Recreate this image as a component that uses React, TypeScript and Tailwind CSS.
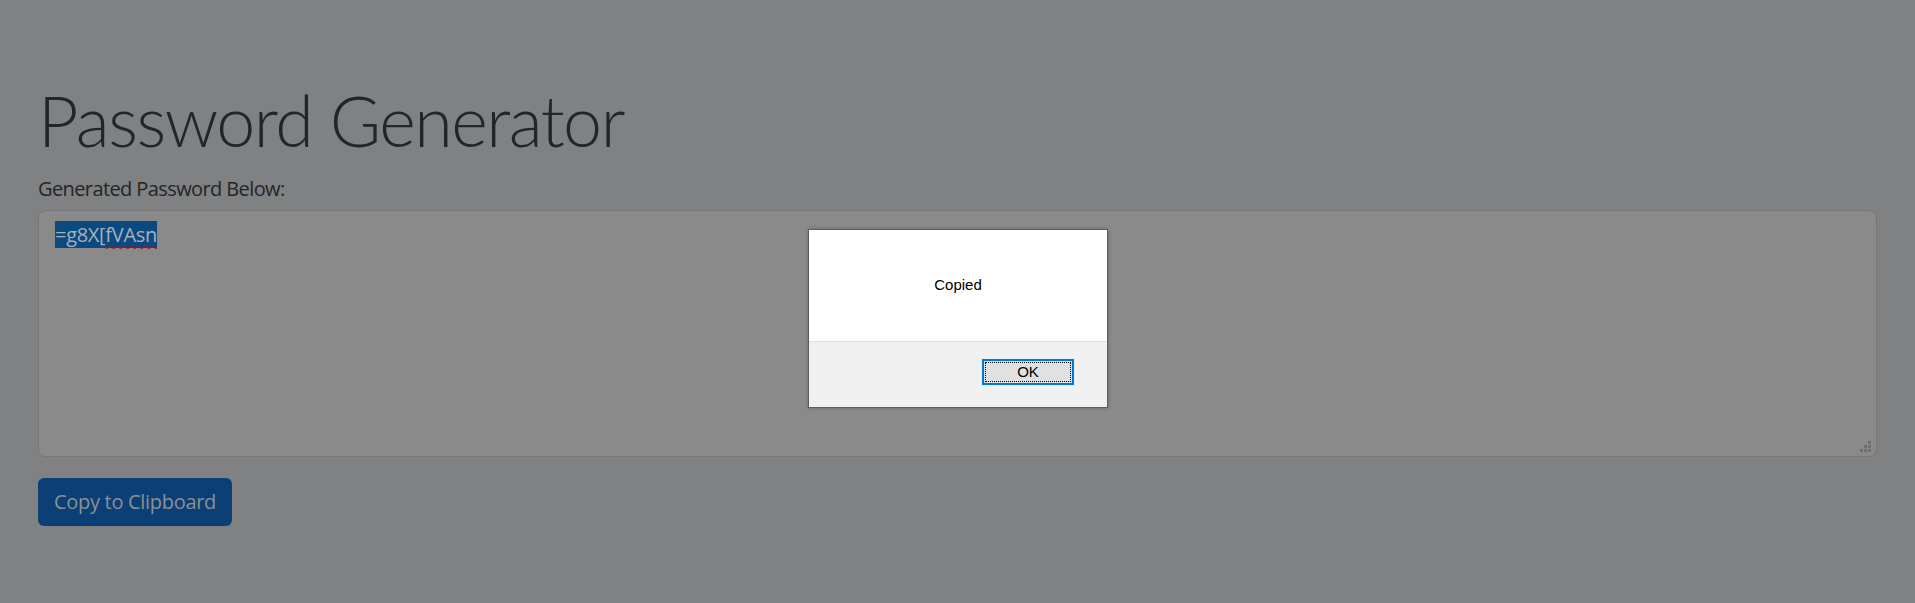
import React from 'react';

const PasswordGenerator = () => {
  return (
    <div className="relative min-h-[603px] w-full bg-[#808183] px-[38px] pt-[78px] font-['Open_Sans','Segoe_UI',sans-serif]">
      <h1 className="font-['Lato','Open_Sans',sans-serif] text-[70px] font-light leading-[1.2] tracking-[-1.5px] text-[#232527]">Password Generator</h1>
      <label className="mt-[12px] block text-[20px] leading-[1.5] text-[#232527] tracking-[-0.6px]">
        Generated Password Below:
      </label>
      <div className="relative mt-[6px] h-[247px] w-full rounded-[8px] border border-[#767778] bg-[#8a8a8a] px-[16px] py-[10px]">
        <span className="bg-[#0b4a80] text-[20px] leading-[27px] text-[#a9b0b8] inline-block tracking-[-0.3px]">
          =g8X[<span className="underline decoration-wavy decoration-[#b0101c] decoration-1 underline-offset-[3px]">fVAsn</span>
        </span>
        {/* resize grip */}
        <div className="absolute bottom-[4px] right-[5px] grid grid-cols-3 gap-[1px]">
          <span className="h-[3px] w-[3px]" />
          <span className="h-[3px] w-[3px]" />
          <span className="h-[3px] w-[3px] bg-[#6e6e6e]" />
          <span className="h-[3px] w-[3px]" />
          <span className="h-[3px] w-[3px] bg-[#6e6e6e]" />
          <span className="h-[3px] w-[3px] bg-[#6e6e6e]" />
          <span className="h-[3px] w-[3px] bg-[#6e6e6e]" />
          <span className="h-[3px] w-[3px] bg-[#6e6e6e]" />
          <span className="h-[3px] w-[3px] bg-[#6e6e6e]" />
        </div>
      </div>
      <button className="mt-[21px] h-[48px] rounded-[6px] bg-[#0c3f76] px-[16px] text-[20px] text-[#8b9196] tracking-[-0.3px]">
        Copy to Clipboard
      </button>

      {/* alert dialog */}
      <div className="absolute left-[808px] top-[229px] flex h-[179px] w-[300px] flex-col border border-[#5c5c5c] bg-white font-['Liberation_Sans',Arial,sans-serif] shadow-[0_0_4px_rgba(0,0,0,0.25)]">
        <div className="flex h-[111px] items-center justify-center text-[15px] text-black">Copied</div>
        <div className="flex flex-1 items-start justify-end border-t border-[#dfdfdf] bg-[#f0f0f0] pr-[33px] pt-[17px]">
          <div className="flex h-[26px] w-[92px] items-center justify-center border-2 border-[#0078d7] bg-[#e1e1e1] p-[1px]">
            <div className="flex h-full w-full items-center justify-center border border-dotted border-black text-[15px] text-black">OK</div>
          </div>
        </div>
      </div>
    </div>
  );
};

export default function App() {
  return <PasswordGenerator />;
}
